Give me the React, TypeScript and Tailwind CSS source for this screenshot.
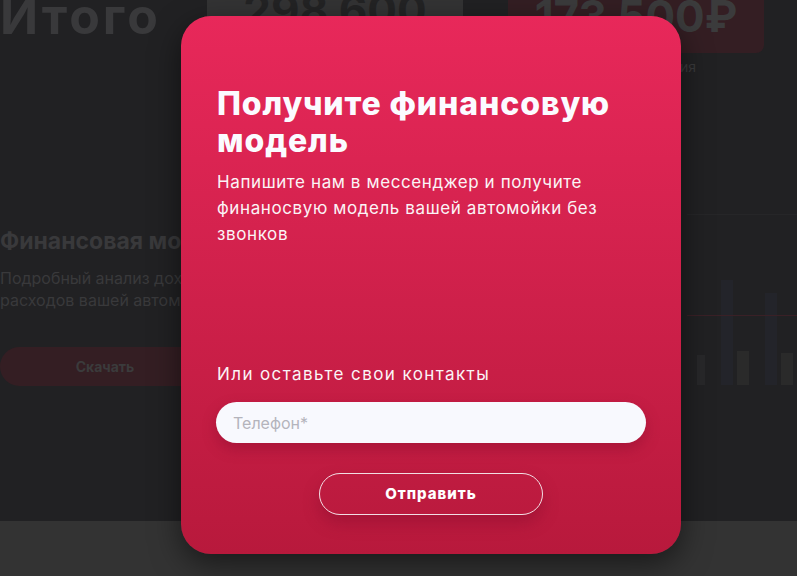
import React from "react";

export default function App() {
  return (
    <div className="relative w-[797px] h-[576px] overflow-hidden bg-[#212123]" style={{ fontFamily: "Inter, 'Noto Sans', sans-serif" }}>
      {/* background page (dimmed) */}
      <div className="flex flex-col h-full">
        <div className="flex-1 flex flex-col">
          {/* top results row */}
          <div className="flex items-start">
            <div className="w-[207px] -mt-[14px] text-[50px] font-bold leading-[60px] text-[#39393b] tracking-[3px]">Итого</div>
            <div className="w-[256px] h-[38px] bg-[#333334] overflow-hidden flex justify-center">
              <span className="-mt-[20px] text-[44px] font-bold text-[#232324] leading-[60px]">298 600</span>
            </div>
            <div className="ml-[45px] flex flex-col items-end">
              <div className="w-[256px] h-[53px] rounded-b-[8px] bg-[#341e23] overflow-hidden flex justify-center">
                <span className="-mt-[14px] text-[44px] font-bold text-[#3b3b3c] leading-[60px]">173 500₽</span>
              </div>
              <span className="mt-[3px] mr-[68px] text-[14px] text-[#3a3a3c]">ия</span>
            </div>
          </div>
          {/* second section */}
          <div className="flex mt-[147px]">
            <div className="w-[240px] flex flex-col">
              <div className="text-[23px] font-bold text-[#39393b] whitespace-nowrap">Финансовая модель</div>
              <div className="mt-[8px] text-[16px] leading-[22px] text-[#39393b] whitespace-nowrap">Подробный анализ доходов и<br />расходов вашей автомойки</div>
              <div className="mt-[36px] w-[210px] h-[39px] rounded-full bg-[#341e23] flex items-center justify-center text-[14px] font-bold text-[#3b3b3c]">Скачать</div>
            </div>
            <div className="ml-auto w-[110px] mt-[-10px] flex flex-col">
              <div className="h-px bg-[#262628] mb-[60px]"></div>
              <div className="flex items-end gap-[16px] h-[110px] pl-[10px] relative">
                <div className="absolute left-0 right-0 top-[40px] h-px bg-[#3a2026]"></div>
                <div className="w-[8px] h-[30px] bg-[#28282a]"></div>
                <div className="flex items-end gap-[4px]">
                  <div className="w-[12px] h-[105px] bg-[#23242a]"></div>
                  <div className="w-[12px] h-[34px] bg-[#2a2a2a]"></div>
                </div>
                <div className="flex items-end gap-[4px]">
                  <div className="w-[12px] h-[92px] bg-[#23242a]"></div>
                  <div className="w-[12px] h-[32px] bg-[#2a2a2a]"></div>
                </div>
              </div>
            </div>
          </div>
        </div>
        <div className="h-[55px] bg-[#333333]"></div>
      </div>

      {/* modal */}
      <div className="absolute left-[181px] top-[16px] w-[500px] h-[538px] rounded-[30px] bg-gradient-to-b from-[#e8285a] to-[#b8193c] shadow-[0_10px_30px_rgba(0,0,0,0.5)] px-[35px] pt-[69px] flex flex-col">
        <h2 className="pl-[1px] text-[32px] leading-[37px] font-extrabold text-[#fbfbff] tracking-[0.9px] whitespace-nowrap">Получите финансовую<br />модель</h2>
        <p className="mt-[10px] pl-[1px] text-[17px] leading-[26px] text-[#fbf3f6] tracking-[0.6px] whitespace-nowrap">Напишите нам в мессенджер и получите<br />финаносвую модель вашей автомойки без<br />звонков</p>
        <p className="mt-[115px] pl-[1px] text-[17px] leading-[24px] text-[#fbf3f6] tracking-[1.4px] whitespace-nowrap">Или оставьте свои контакты</p>
        <div className="mt-[16px] h-[41px] w-[430px] rounded-full bg-[#f8f9fe] shadow-[0_6px_14px_rgba(120,10,40,0.35)] flex items-center px-[17px] text-[16px] text-[#b4b4bc]">Телефон*</div>
        <div className="mt-[30px] self-center w-[224px] h-[42px] rounded-full border border-[#f2dde3] shadow-[0_8px_16px_rgba(120,10,40,0.35)] flex items-center justify-center text-[15px] font-extrabold text-white tracking-[1px]">Отправить</div>
      </div>
    </div>
  );
}
